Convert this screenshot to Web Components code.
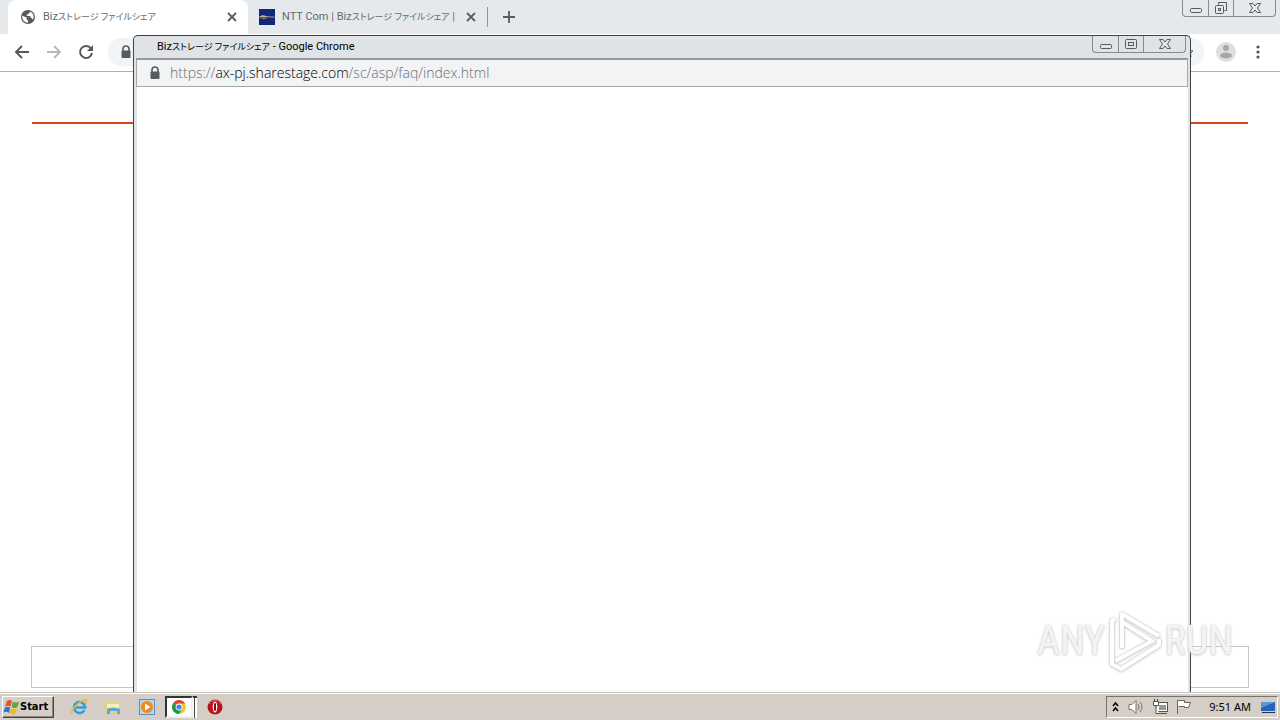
<!DOCTYPE html>
<html lang="ja">
<head>
<meta charset="utf-8">
<title>Bizストレージ ファイルシェア</title>
<style>
html,body{margin:0;height:100%;overflow:hidden}
body{font:11px/16px Roboto,"Noto Sans CJK JP",sans-serif;color:#111}
</style>
</head>
<body>
<desk-top>
  <browser-window>
    <browser-tab slot="tabs" active><globe-icon slot="icon"></globe-icon>Biz<kana-text>ストレージ ファイルシェア</kana-text></browser-tab>
    <browser-tab slot="tabs"><site-icon slot="icon"></site-icon>NTT Com | Biz<kana-text>ストレージ ファイルシェア</kana-text> |</browser-tab>
    <share-page></share-page>
  </browser-window>
  <popup-window slot="popup">
    <span slot="title">Biz<kana-text>ストレージ ファイルシェア</kana-text> - Google Chrome</span>
    <span slot="scheme">https://</span><span slot="host">ax-pj.sharestage.com</span><span slot="path">/sc/asp/faq/index.html</span>
  </popup-window>
  <run-watermark slot="mark"></run-watermark>
  <task-bar slot="bar"></task-bar>
</desk-top>
<script>
const define = (name, html) => customElements.define(name, class extends HTMLElement {
  constructor() {
    super();
    this.attachShadow({mode: 'open'}).innerHTML =
      '<style>:host,*{box-sizing:border-box}button{font:inherit;color:inherit;border:0;padding:0;margin:0;background:none}svg{display:block}</style>' + html;
  }
});
const lock = '<svg width="12" height="14" viewBox="0 0 12 14"><path d="M3 6V4a3 3 0 0 1 6 0v2" fill="none" stroke="#56595d" stroke-width="1.6"/><rect x="1.500" y="5.500" width="9" height="7.500" rx="1" fill="#56595d"/></svg>';

define('kana-text', `<style>:host{display:inline;font-size:9px;font-feature-settings:"palt"}</style><slot></slot>`);

define('globe-icon', `<style>:host{display:block}</style>
<svg width="16" height="16" viewBox="0 0 16 16"><circle cx="8" cy="8" r="7" fill="#56595d"/><path d="M2.200 6.800L6.600 8.500v1.700l1.500 1.300v2.300C4.600 13.800 1.900 10.800 2.200 6.800zM9.700 2.500c.5 1.700-.8 2.300-2.300 2.300v1.500L5.800 7h4.700v2h1.300l.9 1.700c1.900-2.700 1.100-6.600-3-8.200z" fill="#fff"/></svg>`);
define('site-icon', `<style>:host{display:block}</style>
<svg width="16" height="16" viewBox="0 0 16 16"><rect width="16" height="16" fill="#14257c"/><path d="M0 8c2-2 5-2 7-1s6 0 9 1c-3 2-6 0-8 1S2 10 0 8z" fill="#c9b98e"/><path d="M1 8.500h13" stroke="#6a4a55" stroke-width="1"/></svg>`);

define('browser-tab', `<style>
:host{display:flex;align-items:center;gap:7px;width:240px;height:34px;padding:0 10px 0 12px;color:#65696d}
:host([active]){background:#fff;border-radius:8px 8px 0 0}
:host(:not([active])){width:239px;padding-left:11px}
.t{flex:1;white-space:nowrap;overflow:hidden}
button{width:12px;height:12px}
</style><slot name="icon"></slot><span class="t"><slot></slot></span>
<button aria-label="タブを閉じる"><svg width="12" height="12" viewBox="0 0 12 12"><path d="M2 2l8 8M10 2l-8 8" stroke="#595d61" stroke-width="1.800"/></svg></button>`);

define('window-controls', `<style>
:host{display:flex;height:17px;border:1px solid #858b91;border-top:0;border-radius:0 0 4px 4px}
button{width:25px;display:grid;place-items:center}
button+button{border-left:1px solid #858b91}
button:last-child{width:42px}
:host([max]) .one,:host(:not([max])) .two{display:none}
svg{fill:none;stroke:#555b63}
</style>
<button aria-label="最小化"><svg width="16" height="14" viewBox="0 0 16 14"><rect x="2.500" y="7.500" width="11" height="4" rx="1"/></svg></button>
<button aria-label="最大化"><svg class="one" width="14" height="14" viewBox="0 0 14 14"><rect x="1.500" y="2.500" width="11" height="9" rx="1"/><rect x="4.500" y="5.500" width="5" height="3"/></svg>
<svg class="two" width="14" height="14" viewBox="0 0 14 14"><path d="M4.500 3.500v-2h8v8h-2"/><rect x="1.500" y="4.500" width="8" height="8" rx="1"/><rect x="4.500" y="7.500" width="2" height="2"/></svg></button>
<button aria-label="閉じる"><svg width="14" height="14" viewBox="0 0 14 14"><path d="M1.500 2.500h3.500l2 2.500 2-2.500h3.500L9.500 7l3 4.500H9L7 9l-2 2.500H1.500L4.500 7z"/></svg></button>`);

define('browser-window', `<style>
:host{display:flex;flex-direction:column;height:100%;background:#fff}
.strip{display:flex;height:34px;background:#e5e9ec;padding:0 4px 0 8px;flex:none}
.new{display:flex;align-items:center;gap:13px;flex:1}
.new i{width:1px;height:20px;background:#909397}
.bar{display:flex;align-items:center;height:38px;padding:0 14px 1px;border-bottom:1px solid #adafb1;flex:none}
nav{display:flex;gap:16px;margin-right:14px}
.omni{flex:1;height:28px;border-radius:14px;background:#f1f3f4;display:flex;align-items:center;justify-content:space-between;padding:0 10px 0 12px}
.me{margin:0 14px 0 12px}
slot:not([name]){display:block;flex:1;min-height:0}
</style>
<div class="strip"><slot name="tabs"></slot><div class="new"><i></i><button aria-label="新しいタブ"><svg width="16" height="16" viewBox="0 0 16 16"><path d="M2 8h12M8 2v12" stroke="#595d61" stroke-width="1.800"/></svg></button></div><window-controls max></window-controls></div>
<div class="bar"><nav>
<button aria-label="戻る"><svg width="16" height="16" viewBox="0 0 16 16"><path d="M15 8H2M8 2L2 8l6 6" fill="none" stroke="#55595d" stroke-width="1.900"/></svg></button>
<button aria-label="進む"><svg width="16" height="16" viewBox="0 0 16 16"><path d="M1 8h13M8 2l6 6-6 6" fill="none" stroke="#b6b8ba" stroke-width="1.900"/></svg></button>
<button aria-label="再読み込み"><svg width="16" height="16" viewBox="0 0 16 16"><path d="M13 4.500A6 6 0 1 0 14 9" fill="none" stroke="#55595d" stroke-width="2"/><path d="M15 1v6H9z" fill="#55595d"/></svg></button></nav>
<div class="omni">${lock}<svg width="12" height="12" viewBox="0 0 12 12"><path d="M6 1l1.500 3.500L11 5 8.500 7.500 9 11 6 9.300 3 11l.5-3.500L1 5l3.500-.5z" fill="none" stroke="#5f6368"/></svg></div>
<button class="me" aria-label="プロフィール"><svg width="20" height="20" viewBox="0 0 20 20"><circle cx="10" cy="10" r="10" fill="#dedfe0"/><circle cx="10" cy="6" r="3" fill="#a5a7a9"/><ellipse cx="10" cy="13.500" rx="6" ry="3" fill="#a5a7a9"/></svg></button>
<button aria-label="メニュー"><svg width="16" height="16" viewBox="0 0 16 16" fill="#505458"><circle cx="8" cy="3" r="1.600"/><circle cx="8" cy="8" r="1.600"/><circle cx="8" cy="13" r="1.600"/></svg></button></div>
<slot></slot>`);

define('share-page', `<style>
:host{display:flex;flex-direction:column;justify-content:space-between;height:100%;padding:50px 31px 4px}
header{border-top:2px solid #d9441c;margin:0 1px}
footer{height:42px;border:1px solid #c4c4c4}
</style><header></header><footer></footer>`);

define('popup-window', `<style>
:host{display:flex;flex-direction:column;background:#dfe3e6;border:1px solid #3d4349;border-bottom:0;border-radius:5px 5px 0 0;padding:0 2px;overflow:hidden}
header{display:flex;justify-content:space-between;height:22px;padding:0 2px 0 21px;flex:none}
h1{margin:0;font-size:11px;line-height:22px;font-weight:400;color:#000;white-space:nowrap}
.url{display:flex;align-items:center;height:29px;flex:none;background:#f1f3f5;border:1px solid #a4a8ab;border-top:2px solid #92979b;padding:0 12px;font:300 14px/24px "Open Sans",sans-serif;color:#6a6e73}
.url svg{margin-right:9px}
.host{color:#000}
main{flex:1;background:#fff;margin:0 0 0 1px}
</style>
<header><h1><slot name="title"></slot></h1><window-controls></window-controls></header>
<div class="url">${lock}<slot name="scheme"></slot><span class="host"><slot name="host"></slot></span><slot name="path"></slot></div><main></main>`);

define('run-watermark', `<style>
:host{display:flex;align-items:center;justify-content:space-between;width:196px;height:64px;font:40px/64px "Liberation Sans Narrow","Roboto Condensed",Roboto,sans-serif;color:#ffffffcc;text-shadow:0 0 2px #ccc,0 1px 3px #ccc}
svg{filter:drop-shadow(0 0 1px #bbb) drop-shadow(0 1px 1px #ddd)}
</style><span>ANY</span><svg width="56" height="62" viewBox="0 0 56 62" fill="none" stroke="#fff" stroke-width="4" stroke-linejoin="round"><path d="M15 38V4L52 26M15 12L45 31 8 51M8 9L5 11v43l9 5L52 35v-6"/></svg><span>RUN</span>`);

define('task-bar', `<style>
:host{display:flex;align-items:center;justify-content:space-between;height:28px;background:#d5cec6;border-top:1px solid #c5c0b9;box-shadow:inset 0 1px #fff;padding:1px 2px 0 2px;font:11px/16px "DejaVu Sans Condensed","DejaVu Sans",sans-serif;color:#000}
div{display:flex;align-items:center}
.start{display:flex;align-items:center;width:52px;height:22px;border:1px solid;border-color:#fff #444 #444 #fff;box-shadow:inset -1px -1px #8c8781;font-weight:700;white-space:nowrap}
.quick{gap:18px;margin-left:17px}
.app{width:28px;height:22px;background:#fff;border:2px solid;border-color:#333 #eee #eee #333;display:grid;place-items:center;margin-left:10px}
.edge{width:4px;height:22px;background:linear-gradient(90deg,#fff 1px,#444 1px 2px,#fff 2px);border-top:2px solid #333}
.opera{margin-left:10px}
.tray{height:22px;border:1px solid;border-color:#77736e #fff #fff #77736e;padding:0 1px 0 4px;gap:8px}
time{margin:0 1px 0 9px;white-space:nowrap;font-family:"Noto Sans",sans-serif}
</style>
<div>
<button class="start"><svg width="17" height="18" viewBox="0 0 17 18"><path d="M4 3q3-2 5 0L7.500 8.500Q5 7 2 8.500z" fill="#e6542b"/><path d="M10 3.500q3 2 6 0L14.500 9q-3 2-6 0z" fill="#62a83b"/><path d="M2 9.500q3-1.500 5 0L6 15q-2-2-5.500-.5z" fill="#2f72c9"/><path d="M8 10q3 2 6 0l-1.500 5.500q-3 2-6 0z" fill="#f5b924"/></svg>Start</button>
<div class="quick">
<button aria-label="Internet Explorer"><svg width="16" height="18" viewBox="0 0 16 18"><path d="M13.500 12A5.500 5.500 0 1 1 14 8.500v1H4" fill="none" stroke="#329dde" stroke-width="2.600"/><path d="M1 16C-1 12 9 2 15 2c1 1 0 3-1 4" fill="none" stroke="#e4ba35" stroke-width="1.500"/></svg></button>
<button aria-label="Explorer"><svg width="16" height="16" viewBox="0 0 16 16"><path d="M1 2h5l1 1h7v11H1z" fill="#ead27a"/><path d="M2 5h12v4H2z" fill="#faf0b4"/><path d="M2 15v-5q6-3 13 0v5h-3v-3H5v3z" fill="#55a9dc"/></svg></button>
<button aria-label="Media Player"><svg width="16" height="16" viewBox="0 0 16 16"><rect x=".5" y=".5" width="15" height="15" fill="#b7d5ee" stroke="#5793c6"/><circle cx="8" cy="8" r="6" fill="#f08a16"/><path d="M6 4.500L11.500 8 6 11.500z" fill="#fff"/></svg></button></div>
<button class="app" aria-label="Google Chrome"><svg width="14" height="14" viewBox="0 0 14 14"><circle cx="7" cy="7" r="7" fill="#f6c52b"/><path d="M7 7L1 3.500A7 7 0 0 1 13 3.500H7z" fill="#db4437"/><path d="M1 3.500A7 7 0 0 0 7 14l3-5.500L7 7z" fill="#159b58"/><circle cx="7" cy="7" r="3.400" fill="#fff"/><circle cx="7" cy="7" r="2.600" fill="#4285f4"/></svg></button><span class="edge"></span>
<button class="opera" aria-label="Opera"><svg width="16" height="16" viewBox="0 0 16 16"><circle cx="8" cy="8" r="7.500" fill="#b91218"/><path d="M2 5a7 7 0 0 1 12 0" fill="none" stroke="#e2696b"/><ellipse cx="8" cy="8" rx="2.300" ry="5.500" fill="#fff"/><rect x="7" y="4" width="2" height="8" rx="1" fill="#8e0d12"/></svg></button>
</div>
<div class="tray">
<button aria-label="隠れているアイコン"><svg width="9" height="12" viewBox="0 0 9 12"><path d="M2 5l2.500-3L7 5M2 10l2.500-3L7 10" fill="none" stroke="#000" stroke-width="1.500"/></svg></button>
<svg width="16" height="16" viewBox="0 0 16 16"><path d="M1 5.500h3l4-4v13l-4-4H1z" fill="#fff" stroke="#77736f"/><path d="M10 5q2 3 0 6M12 3q4 5 0 10" fill="none" stroke="#77736f"/></svg>
<svg width="16" height="16" viewBox="0 0 16 16"><rect x="4.500" y="3.500" width="11" height="9" fill="#fff" stroke="#55524e"/><rect x="7" y="6" width="7" height="5" fill="#99958f"/><path d="M7 14.500h8" stroke="#55524e"/><path d="M1.500 2.500h5v4h-5zM4 6.500v8h3M2.500 0v2M5.500 0v2" fill="#fff" stroke="#55524e"/></svg>
<svg width="16" height="16" viewBox="0 0 16 16"><path d="M1.500 15V1.500h7v2h6l-2 5h-4v-1h-6" fill="#fff" stroke="#66625e"/></svg>
<time>9:51 AM</time>
<svg width="16" height="14" viewBox="0 0 16 14"><path d="M1 2h14v9H1z" fill="#2764b5"/><path d="M1 2h14L1 8z" fill="#5a9ad9"/><path d="M2 12.500h13" stroke="#1d3458"/></svg>
</div>`);

define('desk-top', `<style>
:host{display:flex;flex-direction:column;height:100vh;position:relative}
.stage{position:relative;flex:1;min-height:0}
slot[name=popup]::slotted(*){position:absolute;top:35px;left:133px;right:89px;bottom:0}
slot[name=mark]::slotted(*){position:absolute;right:47px;bottom:19px}
</style><div class="stage"><slot></slot><slot name="popup"></slot><slot name="mark"></slot></div><slot name="bar"></slot>`);
</script>
</body>
</html>
